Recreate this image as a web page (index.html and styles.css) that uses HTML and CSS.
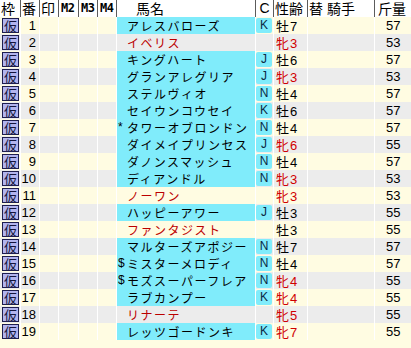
FILE: index.html
```html
<!DOCTYPE html>
<html lang="ja">
<head>
<meta charset="utf-8">
<title>出馬表</title>
<link rel="stylesheet" href="styles.css">
</head>
<body>
<div class="board">
  <div class="row head">
    <div class="c h-waku">枠</div>
    <div class="c h-ban">番</div>
    <div class="c h-shirushi">印</div>
    <div class="c h-m">M2</div>
    <div class="c h-m">M3</div>
    <div class="c h-m">M4</div>
    <div class="c h-name">馬名</div>
    <div class="c h-cls">C</div>
    <div class="c h-sex">性齢</div>
    <div class="c h-jockey">替<span class="gap">騎手</span></div>
    <div class="c h-kin">斤量</div>
  </div>

  <div class="row odd">
    <div class="c"><span class="kari">仮</span></div><div class="c num">1</div><div class="c"></div><div class="c"></div><div class="c"></div><div class="c"></div>
    <div class="c name reg"><span class="mk"></span>アレスバローズ</div><div class="c"><span class="cls">K</span></div>
    <div class="c sex"><span class="kj">牡</span>7</div><div class="c"></div><div class="c kin">57</div>
  </div>
  <div class="row even">
    <div class="c"><span class="kari">仮</span></div><div class="c num">2</div><div class="c"></div><div class="c"></div><div class="c"></div><div class="c"></div>
    <div class="c name unreg"><span class="mk"></span>イベリス</div><div class="c"></div>
    <div class="c sex fem"><span class="kj">牝</span>3</div><div class="c"></div><div class="c kin">53</div>
  </div>
  <div class="row odd">
    <div class="c"><span class="kari">仮</span></div><div class="c num">3</div><div class="c"></div><div class="c"></div><div class="c"></div><div class="c"></div>
    <div class="c name reg"><span class="mk"></span>キングハート</div><div class="c"><span class="cls">J</span></div>
    <div class="c sex"><span class="kj">牡</span>6</div><div class="c"></div><div class="c kin">57</div>
  </div>
  <div class="row even">
    <div class="c"><span class="kari">仮</span></div><div class="c num">4</div><div class="c"></div><div class="c"></div><div class="c"></div><div class="c"></div>
    <div class="c name reg"><span class="mk"></span>グランアレグリア</div><div class="c"><span class="cls">J</span></div>
    <div class="c sex fem"><span class="kj">牝</span>3</div><div class="c"></div><div class="c kin">53</div>
  </div>
  <div class="row odd">
    <div class="c"><span class="kari">仮</span></div><div class="c num">5</div><div class="c"></div><div class="c"></div><div class="c"></div><div class="c"></div>
    <div class="c name reg"><span class="mk"></span>ステルヴィオ</div><div class="c"><span class="cls">N</span></div>
    <div class="c sex"><span class="kj">牡</span>4</div><div class="c"></div><div class="c kin">57</div>
  </div>
  <div class="row even">
    <div class="c"><span class="kari">仮</span></div><div class="c num">6</div><div class="c"></div><div class="c"></div><div class="c"></div><div class="c"></div>
    <div class="c name reg"><span class="mk"></span>セイウンコウセイ</div><div class="c"><span class="cls">K</span></div>
    <div class="c sex"><span class="kj">牡</span>6</div><div class="c"></div><div class="c kin">57</div>
  </div>
  <div class="row odd">
    <div class="c"><span class="kari">仮</span></div><div class="c num">7</div><div class="c"></div><div class="c"></div><div class="c"></div><div class="c"></div>
    <div class="c name reg"><span class="mk">*</span>タワーオブロンドン</div><div class="c"><span class="cls">N</span></div>
    <div class="c sex"><span class="kj">牡</span>4</div><div class="c"></div><div class="c kin">57</div>
  </div>
  <div class="row even">
    <div class="c"><span class="kari">仮</span></div><div class="c num">8</div><div class="c"></div><div class="c"></div><div class="c"></div><div class="c"></div>
    <div class="c name reg"><span class="mk"></span>ダイメイプリンセス</div><div class="c"><span class="cls">J</span></div>
    <div class="c sex fem"><span class="kj">牝</span>6</div><div class="c"></div><div class="c kin">55</div>
  </div>
  <div class="row odd">
    <div class="c"><span class="kari">仮</span></div><div class="c num">9</div><div class="c"></div><div class="c"></div><div class="c"></div><div class="c"></div>
    <div class="c name reg"><span class="mk"></span>ダノンスマッシュ</div><div class="c"><span class="cls">N</span></div>
    <div class="c sex"><span class="kj">牡</span>4</div><div class="c"></div><div class="c kin">57</div>
  </div>
  <div class="row even">
    <div class="c"><span class="kari">仮</span></div><div class="c num">10</div><div class="c"></div><div class="c"></div><div class="c"></div><div class="c"></div>
    <div class="c name reg"><span class="mk"></span>ディアンドル</div><div class="c"><span class="cls">N</span></div>
    <div class="c sex fem"><span class="kj">牝</span>3</div><div class="c"></div><div class="c kin">53</div>
  </div>
  <div class="row odd">
    <div class="c"><span class="kari">仮</span></div><div class="c num">11</div><div class="c"></div><div class="c"></div><div class="c"></div><div class="c"></div>
    <div class="c name unreg"><span class="mk"></span>ノーワン</div><div class="c"></div>
    <div class="c sex fem"><span class="kj">牝</span>3</div><div class="c"></div><div class="c kin">53</div>
  </div>
  <div class="row even">
    <div class="c"><span class="kari">仮</span></div><div class="c num">12</div><div class="c"></div><div class="c"></div><div class="c"></div><div class="c"></div>
    <div class="c name reg"><span class="mk"></span>ハッピーアワー</div><div class="c"><span class="cls">J</span></div>
    <div class="c sex"><span class="kj">牡</span>3</div><div class="c"></div><div class="c kin">55</div>
  </div>
  <div class="row odd">
    <div class="c"><span class="kari">仮</span></div><div class="c num">13</div><div class="c"></div><div class="c"></div><div class="c"></div><div class="c"></div>
    <div class="c name unreg"><span class="mk"></span>ファンタジスト</div><div class="c"></div>
    <div class="c sex"><span class="kj">牡</span>3</div><div class="c"></div><div class="c kin">55</div>
  </div>
  <div class="row even">
    <div class="c"><span class="kari">仮</span></div><div class="c num">14</div><div class="c"></div><div class="c"></div><div class="c"></div><div class="c"></div>
    <div class="c name reg"><span class="mk"></span>マルターズアポジー</div><div class="c"><span class="cls">N</span></div>
    <div class="c sex"><span class="kj">牡</span>7</div><div class="c"></div><div class="c kin">57</div>
  </div>
  <div class="row odd">
    <div class="c"><span class="kari">仮</span></div><div class="c num">15</div><div class="c"></div><div class="c"></div><div class="c"></div><div class="c"></div>
    <div class="c name reg"><span class="mk">$</span>ミスターメロディ</div><div class="c"><span class="cls">N</span></div>
    <div class="c sex"><span class="kj">牡</span>4</div><div class="c"></div><div class="c kin">57</div>
  </div>
  <div class="row even">
    <div class="c"><span class="kari">仮</span></div><div class="c num">16</div><div class="c"></div><div class="c"></div><div class="c"></div><div class="c"></div>
    <div class="c name reg"><span class="mk">$</span>モズスーパーフレア</div><div class="c"><span class="cls">N</span></div>
    <div class="c sex fem"><span class="kj">牝</span>4</div><div class="c"></div><div class="c kin">55</div>
  </div>
  <div class="row odd">
    <div class="c"><span class="kari">仮</span></div><div class="c num">17</div><div class="c"></div><div class="c"></div><div class="c"></div><div class="c"></div>
    <div class="c name reg"><span class="mk"></span>ラブカンプー</div><div class="c"><span class="cls">K</span></div>
    <div class="c sex fem"><span class="kj">牝</span>4</div><div class="c"></div><div class="c kin">55</div>
  </div>
  <div class="row even">
    <div class="c"><span class="kari">仮</span></div><div class="c num">18</div><div class="c"></div><div class="c"></div><div class="c"></div><div class="c"></div>
    <div class="c name unreg"><span class="mk"></span>リナーテ</div><div class="c"></div>
    <div class="c sex fem"><span class="kj">牝</span>5</div><div class="c"></div><div class="c kin">55</div>
  </div>
  <div class="row odd">
    <div class="c"><span class="kari">仮</span></div><div class="c num">19</div><div class="c"></div><div class="c"></div><div class="c"></div><div class="c"></div>
    <div class="c name reg"><span class="mk"></span>レッツゴードンキ</div><div class="c"><span class="cls">K</span></div>
    <div class="c sex fem"><span class="kj">牝</span>7</div><div class="c"></div><div class="c kin">55</div>
  </div>
</div>
</body>
</html>
```

FILE: styles.css
```css
html, body {
  margin: 0;
  padding: 0;
}
body {
  width: 411px;
  height: 348px;
  overflow: hidden;
  background: #fffce2;
  font-family: "Noto Sans CJK JP", sans-serif;
  color: #000;
}
.board {
  display: flex;
  flex-direction: column;
}
.row {
  display: grid;
  grid-template-columns: 21px 19px 19px 20px 19px 19px 139px 18px 34px 67px 36px;
  height: 17px;
}
.c {
  box-sizing: border-box;
  height: 17px;
  border-right: 1px solid #ffffff;
  white-space: nowrap;
}
.head {
  background: #ffffff;
}
.head .c {
  border-right: 1px solid #5c5c5c;
  font-size: 14px;
  line-height: 17px;
  padding-left: 1px;
}
.head .c:last-child,
.row .c:last-child {
  border-right: none;
}
.h-m {
  font-family: "DejaVu Sans Mono", monospace;
  font-size: 12px !important;
  font-weight: bold;
  letter-spacing: -0.5px;
  padding-left: 2px !important;
}
.h-name {
  padding-left: 19px !important;
}
.h-cls {
  text-align: center;
  font-family: "Liberation Sans", sans-serif;
  padding-left: 0 !important;
}
.h-kin {
  padding-left: 3px !important;
}
.gap {
  margin-left: 4px;
}
.odd {
  background: #fffce2;
}
.even {
  background: #ececec;
}
.kari {
  display: block;
  box-sizing: border-box;
  width: 17px;
  height: 15px;
  margin: 1px 0 0 2px;
  border: 1px solid #1e1e4e;
  background: #b2b4ee;
  color: #14143c;
  font-size: 13px;
  line-height: 13px;
  text-align: center;
  overflow: hidden;
}
.num {
  font-family: "Liberation Sans", sans-serif;
  font-size: 13px;
  line-height: 17px;
  text-align: right;
  padding-right: 3px;
}
.name {
  display: flex;
  padding-left: 1px;
  font-size: 12px;
  line-height: 17px;
  letter-spacing: 1.5px;
  overflow: hidden;
}
.name.reg {
  background: #80ecfb;
  color: #000;
}
.name.unreg {
  color: #bb0000;
}
.mk {
  display: inline-block;
  width: 9px;
  flex: none;
  letter-spacing: 0;
  font-family: "Liberation Sans", sans-serif;
}
.cls {
  display: block;
  width: 16px;
  height: 15px;
  margin-top: 1px;
  border-radius: 2px;
  background: #80ecfb;
  color: #0b2a44;
  font-family: "Liberation Sans", sans-serif;
  font-size: 12px;
  line-height: 15px;
  text-align: center;
}
.sex {
  padding-left: 2px;
  font-family: "Liberation Sans", sans-serif;
  font-size: 13px;
  line-height: 17px;
}
.kj {
  font-family: "Noto Sans CJK JP", sans-serif;
  font-size: 13px;
  margin-right: 1px;
}
.fem {
  color: #d00000;
}
.kin {
  padding-left: 11px;
  font-family: "Liberation Sans", sans-serif;
  font-size: 13px;
  line-height: 17px;
}
```
